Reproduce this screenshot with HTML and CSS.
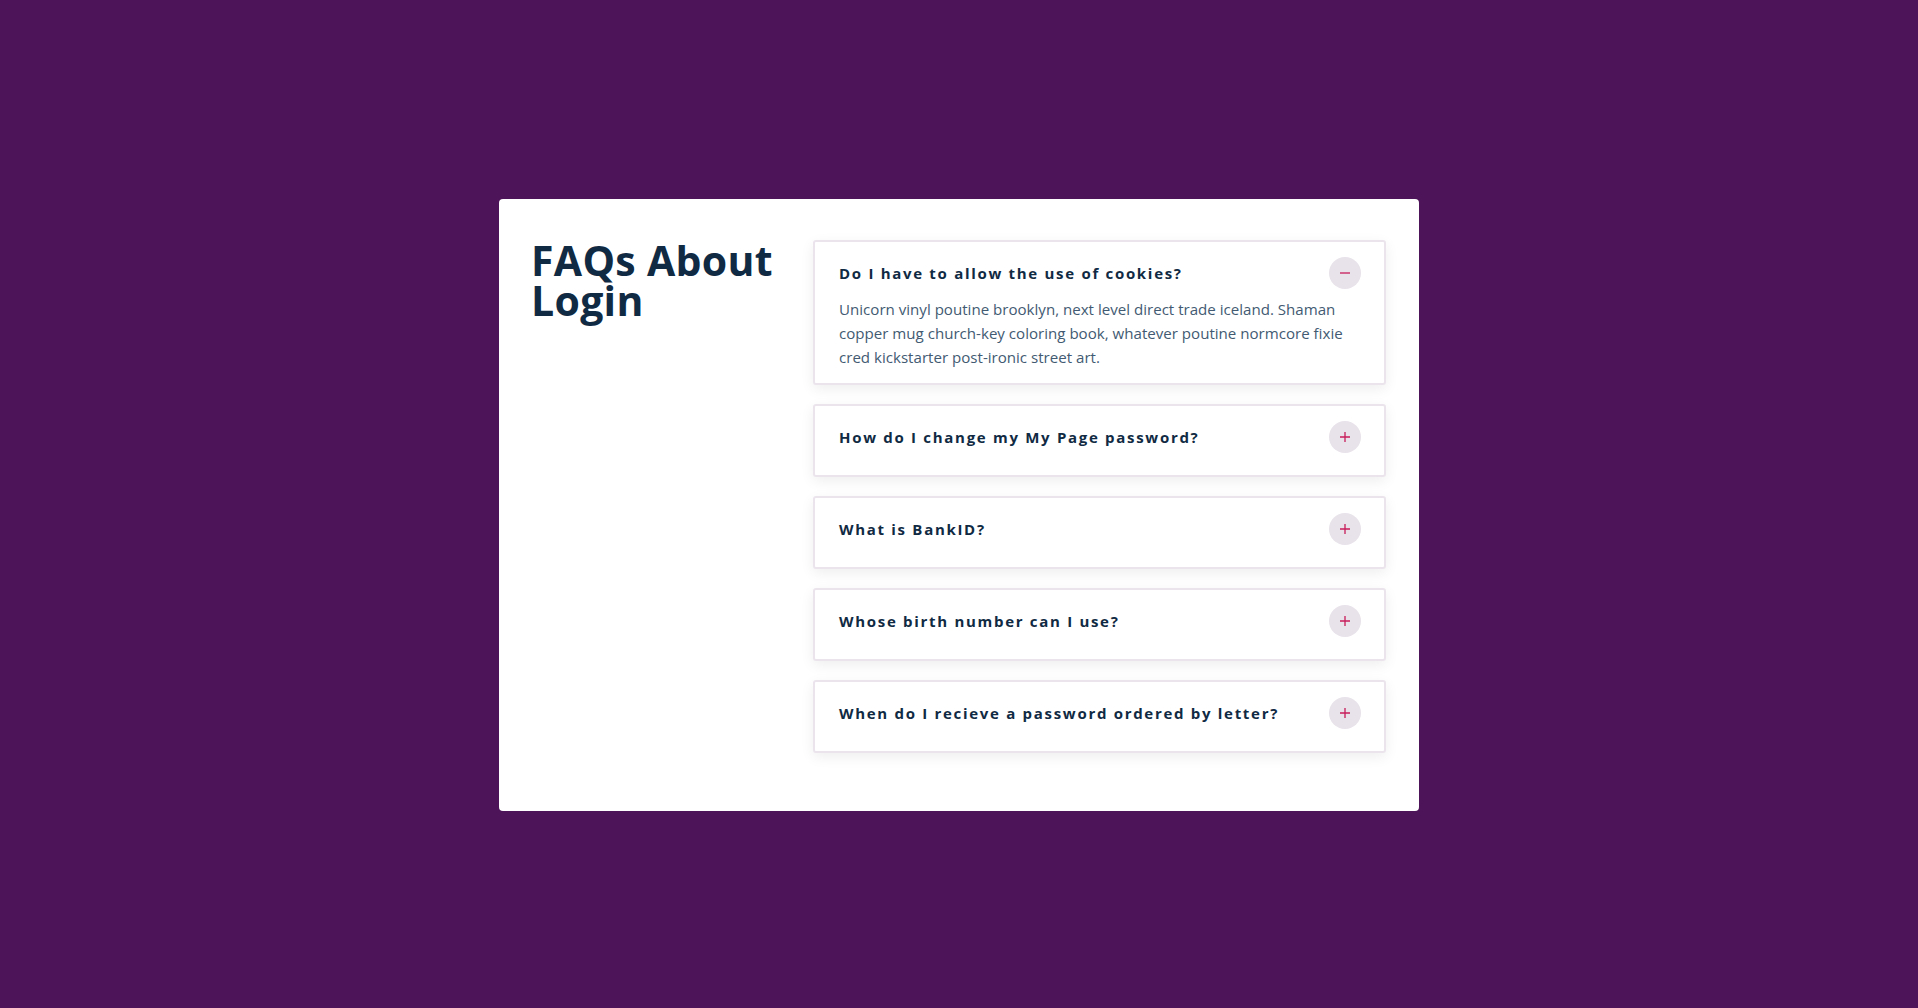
FILE: index.html
```html
<!DOCTYPE html>
<html lang="en">
<head>
<meta charset="utf-8">
<title>FAQs About Login</title>
<link rel="stylesheet" href="styles.css">
</head>
<body>
<main class="page">
  <section class="card">
    <h1 class="title">FAQs About Login</h1>
    <div class="faq-list">
      <article class="faq open">
        <div class="faq-head">
          <h2 class="question">Do I have to allow the use of cookies?</h2>
          <span class="toggle"><svg width="12" height="12" viewBox="0 0 12 12"><path d="M1 6h10" stroke="#c71d5a" stroke-width="1.3"/></svg></span>
        </div>
        <p class="answer">Unicorn vinyl poutine brooklyn, next level direct trade iceland. Shaman copper mug church-key coloring book, whatever poutine normcore fixie cred kickstarter post-ironic street art.</p>
      </article>
      <article class="faq">
        <div class="faq-head">
          <h2 class="question">How do I change my My Page password?</h2>
          <span class="toggle"><svg width="12" height="12" viewBox="0 0 12 12"><path d="M1 6h10M6 1v10" stroke="#c71d5a" stroke-width="1.3"/></svg></span>
        </div>
      </article>
      <article class="faq">
        <div class="faq-head">
          <h2 class="question">What is BankID?</h2>
          <span class="toggle"><svg width="12" height="12" viewBox="0 0 12 12"><path d="M1 6h10M6 1v10" stroke="#c71d5a" stroke-width="1.3"/></svg></span>
        </div>
      </article>
      <article class="faq">
        <div class="faq-head">
          <h2 class="question">Whose birth number can I use?</h2>
          <span class="toggle"><svg width="12" height="12" viewBox="0 0 12 12"><path d="M1 6h10M6 1v10" stroke="#c71d5a" stroke-width="1.3"/></svg></span>
        </div>
      </article>
      <article class="faq">
        <div class="faq-head">
          <h2 class="question">When do I recieve a password ordered by letter?</h2>
          <span class="toggle"><svg width="12" height="12" viewBox="0 0 12 12"><path d="M1 6h10M6 1v10" stroke="#c71d5a" stroke-width="1.3"/></svg></span>
        </div>
      </article>
    </div>
  </section>
</main>
</body>
</html>
```

FILE: styles.css
```css
* { box-sizing: border-box; }
html, body { margin: 0; padding: 0; }
body {
  background: #4e1459;
  font-family: "Open Sans", "Noto Sans", sans-serif;
  min-height: 1008px;
}
.page {
  display: flex;
  justify-content: center;
  padding-top: 199px;
}
.card {
  width: 920px;
  background: #fff;
  border-radius: 4px;
  padding: 41px 33px 39px 32px;
  display: grid;
  grid-template-columns: 282px 1fr;
  align-items: start;
}
.title {
  margin: 0;
  font-size: 41px;
  line-height: 40px;
  font-weight: 700;
  color: #102a43;
  letter-spacing: 0.3px;
}
.faq-list { display: flex; flex-direction: column; }
.faq {
  background: #fff;
  border: 2px solid #ebe4ec;
  border-radius: 3px;
  box-shadow: 0 4px 14px rgba(0, 0, 0, 0.07);
  padding: 15px 23px 22px 24px;
  margin-bottom: 19px;
}
.faq-head {
  display: flex;
  align-items: center;
  justify-content: space-between;
  height: 32px;
}
.question {
  margin: 0;
  font-size: 15px;
  font-weight: 700;
  color: #102a43;
  letter-spacing: 1.7px;
}
.toggle {
  width: 32px;
  height: 32px;
  border-radius: 50%;
  background: #e8e2ea;
  display: flex;
  align-items: center;
  justify-content: center;
  flex: none;
}
.toggle svg { display: block; }
.answer {
  margin: 8px 0 0;
  font-size: 15.1px;
  line-height: 24px;
  color: #425a72;
  padding-right: 14px;
}
.faq.open { padding-bottom: 14px; }
```
